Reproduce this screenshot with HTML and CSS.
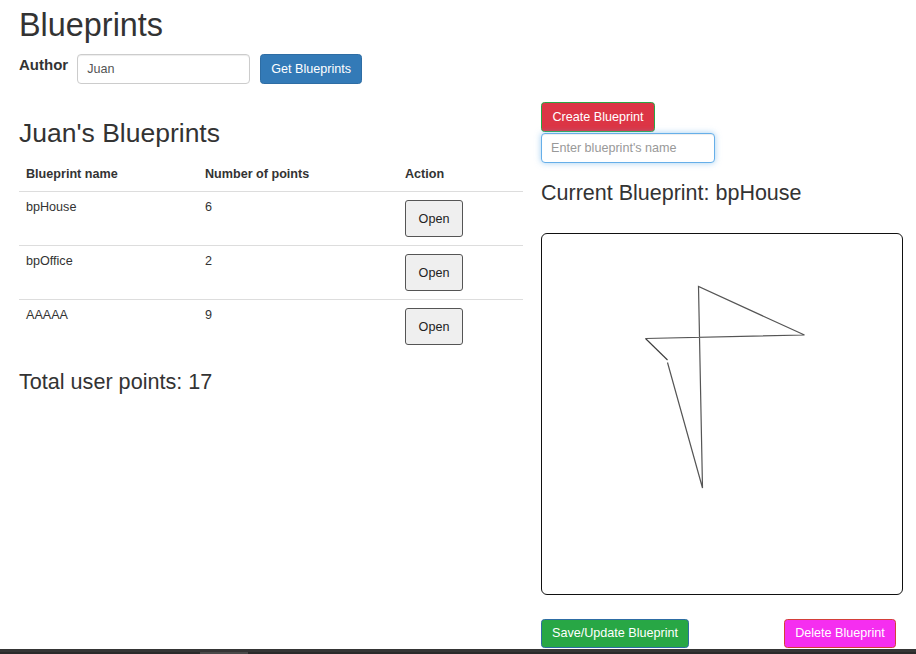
FILE: index.html
```html
<!DOCTYPE html>
<html lang="en">
<head>
<meta charset="utf-8">
<title>Blueprints</title>
<link rel="stylesheet" href="styles.css">
</head>
<body>
<div class="page">
  <h1 class="title">Blueprints</h1>
  <div class="author-row">
    <label class="author-label" for="author">Author</label>
    <input id="author" class="field author-input" type="text" value="Juan">
    <button class="btn btn-primary">Get Blueprints</button>
  </div>
  <div class="columns">
    <div class="left-col">
      <h2 class="list-title">Juan's Blueprints</h2>
      <table class="bp-table">
        <colgroup><col class="c1"><col class="c2"><col class="c3"></colgroup>
        <thead>
          <tr><th>Blueprint name</th><th>Number of points</th><th>Action</th></tr>
        </thead>
        <tbody>
          <tr><td>bpHouse</td><td>6</td><td><button class="open-btn">Open</button></td></tr>
          <tr><td>bpOffice</td><td>2</td><td><button class="open-btn">Open</button></td></tr>
          <tr><td>AAAAA</td><td>9</td><td><button class="open-btn">Open</button></td></tr>
        </tbody>
      </table>
      <h3 class="total">Total user points: 17</h3>
    </div>
    <div class="right-col">
      <button class="btn btn-create">Create Blueprint</button>
      <input class="field name-input" type="text" placeholder="Enter blueprint's name">
      <h3 class="current">Current Blueprint: bpHouse</h3>
      <div class="canvas">
        <svg width="360" height="360" viewBox="0 0 360 360">
          <polyline points="103.5,104.5 125.5,126" fill="none" stroke="#3a3a3a" stroke-width="1.1"/>
          <polyline points="125.5,128.5 160.5,254 156.5,52.5 262.5,101 103.5,104.5" fill="none" stroke="#555" stroke-width="1.2"/>
        </svg>
      </div>
      <div class="actions">
        <button class="btn btn-save">Save/Update Blueprint</button>
        <button class="btn btn-delete">Delete Blueprint</button>
      </div>
    </div>
  </div>
</div>
<div class="scrollbar"><div class="thumb"></div></div>
</body>
</html>
```

FILE: styles.css
```css
* { box-sizing: border-box; }

body {
  margin: 0;
  font-family: "Liberation Sans", Arial, sans-serif;
  font-size: 12.6px;
  line-height: 18px;
  color: #333;
  background: #fff;
}

.page {
  padding: 0 13px 0 19px;
}

.title {
  margin: 8px 0 0;
  font-size: 32.4px;
  line-height: 1.1;
  font-weight: 500;
}

.author-row {
  display: flex;
  align-items: flex-start;
  margin-top: 10px;
  height: 30px;
}

.author-label {
  font-weight: bold;
  font-size: 15px;
  line-height: 18px;
  padding-top: 2px;
  margin-right: 9px;
}

.field {
  font-family: "Liberation Sans", Arial, sans-serif;
  font-size: 12.6px;
  color: #555;
  height: 30px;
  border: 1px solid #ccc;
  border-radius: 4px;
  padding: 5px 9px;
  box-shadow: inset 0 1px 1px rgba(0,0,0,.075);
  outline: none;
}

.author-input {
  width: 173px;
  margin-right: 10px;
  padding-left: 9px;
}

.btn {
  font-family: "Liberation Sans", Arial, sans-serif;
  font-size: 12.6px;
  line-height: 18px;
  color: #fff;
  height: 30px;
  padding: 5px 8px;
  border: 1px solid transparent;
  border-radius: 3.5px;
  white-space: nowrap;
  cursor: pointer;
}

.btn-primary {
  background: #337ab7;
  border-color: #2e6da4;
  width: 102px;
}

.columns {
  display: grid;
  grid-template-columns: 504px 362px;
  column-gap: 18px;
  margin-top: 18px;
}

.list-title {
  margin: 17px 0 10px;
  font-size: 26.5px;
  line-height: 1.1;
  font-weight: 500;
}

.bp-table {
  width: 504px;
  border-collapse: collapse;
  margin-bottom: 17px;
}

.bp-table .c1 { width: 179px; }
.bp-table .c2 { width: 200px; }

.bp-table th {
  text-align: left;
  font-weight: bold;
  padding: 7px 7px 8px;
  border-bottom: 1px solid #ddd;
  vertical-align: bottom;
}

.bp-table td {
  padding: 6px 7px 7.5px;
  border-top: 1px solid #ddd;
  vertical-align: top;
}

.open-btn {
  display: block;
  margin-top: 2px;
  width: 58px;
  height: 37.5px;
  font-family: "Liberation Sans", Arial, sans-serif;
  font-size: 12.6px;
  color: #222;
  background: #efefef;
  border: 1px solid #555;
  border-radius: 3px;
  padding: 0;
}

.total {
  margin: 0;
  font-size: 21.6px;
  line-height: 1.1;
  font-weight: 500;
}

.right-col {
  display: flex;
  flex-direction: column;
  align-items: flex-start;
}

.btn-create {
  background: #dc3545;
  border-color: #28a745;
  width: 114px;
}

.name-input {
  margin-top: 1px;
  width: 174px;
  border-color: #66afe9;
  box-shadow: inset 0 1px 1px rgba(0,0,0,.075), 0 0 6px rgba(102,175,233,.6);
}

.name-input::placeholder { color: #999; }

.current {
  margin: 19px 0 0;
  font-size: 21.5px;
  line-height: 1.1;
  font-weight: 500;
}

.canvas {
  margin-top: 28px;
  width: 362px;
  height: 362px;
  border: 1px solid #111;
  border-radius: 6px;
  overflow: hidden;
}

.canvas svg { display: block; }

.actions {
  margin-top: 24px;
  width: 355px;
  display: flex;
  justify-content: space-between;
}

.btn-save {
  background: #28a745;
  border-color: #2e6da4;
  width: 148px;
  height: 29px;
  padding-top: 4px;
}

.btn-delete {
  background: #f52ef0;
  border-color: #d43f3a;
  width: 112px;
  height: 29px;
  padding-top: 4px;
}

.scrollbar {
  position: fixed;
  left: 0;
  right: 0;
  bottom: 0;
  height: 5px;
  background: linear-gradient(#353535 0 3px, #2a2a2a 3px);
}

.scrollbar .thumb {
  position: absolute;
  left: 200px;
  bottom: 0;
  width: 48px;
  height: 2px;
  background: #4a4a4a;
}
```
